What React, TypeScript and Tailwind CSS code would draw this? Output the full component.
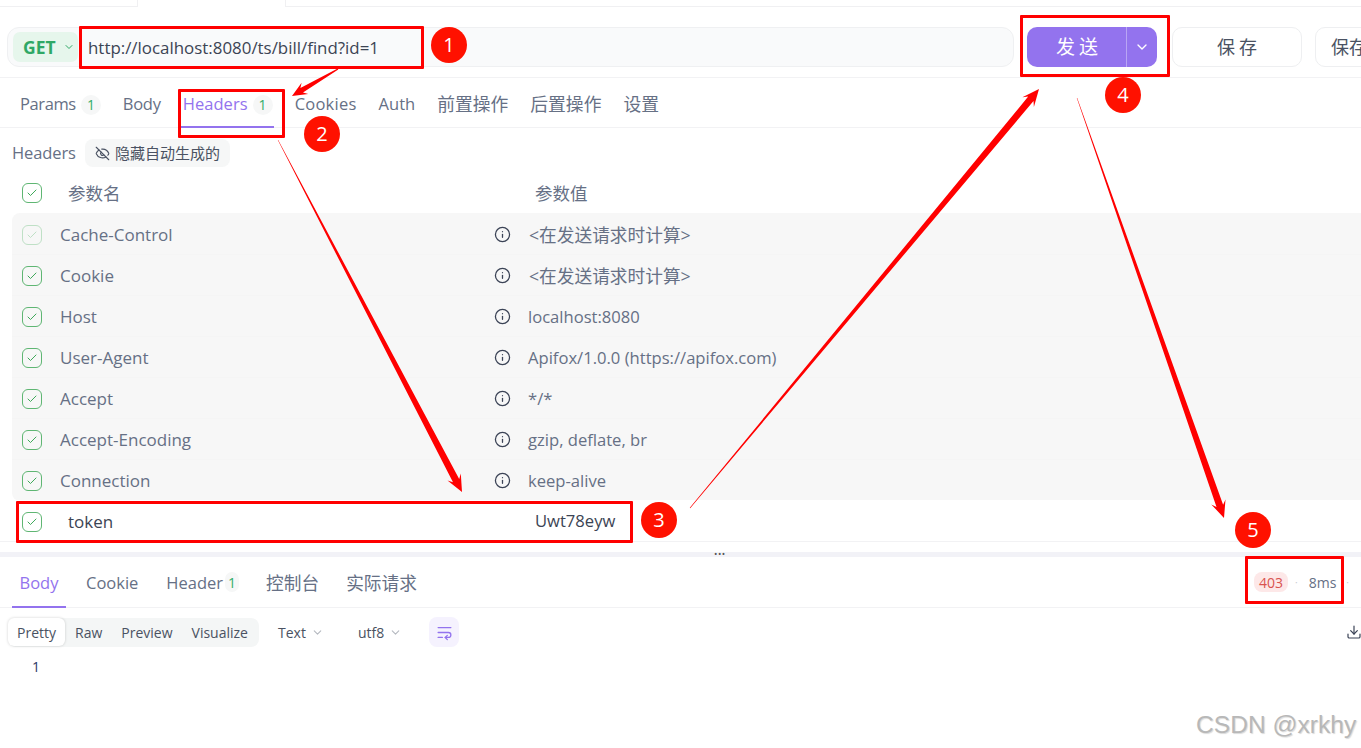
import { Check, ChevronDown, Download, EyeOff, Info, WrapText } from 'lucide-react';

const requestTabs = [
  { label: 'Params', badge: '1', spacing: 'tracking-[-0.4px]' },
  { label: 'Body', spacing: 'tracking-[-0.25px]' },
  { label: 'Headers', badge: '1', active: true, spacing: 'tracking-[0.05px]' },
  { label: 'Cookies', spacing: 'tracking-[0.25px]' },
  { label: 'Auth' },
  { label: '前置操作', spacing: 'text-[17.8px]' },
  { label: '后置操作', spacing: 'text-[17.8px]' },
  { label: '设置', spacing: 'text-[17.8px]' },
];

const autoHeaders = [
  { name: 'Cache-Control', value: '<在发送请求时计算>', faded: true, cjk: true },
  { name: 'Cookie', value: '<在发送请求时计算>', cjk: true },
  { name: 'Host', value: 'localhost:8080' },
  { name: 'User-Agent', value: 'Apifox/1.0.0 (https://apifox.com)' },
  { name: 'Accept', value: '*/*' },
  { name: 'Accept-Encoding', value: 'gzip, deflate, br' },
  { name: 'Connection', value: 'keep-alive' },
];

const boxes = [
  'left-[79px] top-[26px] w-[345px] h-[43px]',
  'left-[178px] top-[89px] w-[107px] h-[49px]',
  'left-[16px] top-[501px] w-[617px] h-[42px]',
  'left-[1020px] top-[15px] w-[150px] h-[62px]',
  'left-[1245px] top-[556px] w-[99px] h-[48px]',
];

const markers = [
  { n: '1', pos: 'left-[431px] top-[27px]' },
  { n: '2', pos: 'left-[304px] top-[116px]' },
  { n: '3', pos: 'left-[641px] top-[502px]' },
  { n: '4', pos: 'left-[1105px] top-[77px]' },
  { n: '5', pos: 'left-[1235px] top-[512px]' },
];

// tapered arrow: thin tail, thick at the head
function arrowPoints(x1: number, y1: number, x2: number, y2: number, tail: number, body: number, headW: number, headL: number) {
  const len = Math.hypot(x2 - x1, y2 - y1);
  const ux = (x2 - x1) / len;
  const uy = (y2 - y1) / len;
  const nx = -uy;
  const ny = ux;
  const bx = x2 - ux * headL;
  const by = y2 - uy * headL;
  const nb = bx + ux * headL * 0.25;
  const mb = by + uy * headL * 0.25;
  const p = (x: number, y: number) => `${x.toFixed(1)},${y.toFixed(1)}`;
  return [
    p(x1 + (nx * tail) / 2, y1 + (ny * tail) / 2),
    p(nb + (nx * body) / 2, mb + (ny * body) / 2),
    p(bx + (nx * headW) / 2, by + (ny * headW) / 2),
    p(x2, y2),
    p(bx - (nx * headW) / 2, by - (ny * headW) / 2),
    p(nb - (nx * body) / 2, mb - (ny * body) / 2),
    p(x1 - (nx * tail) / 2, y1 - (ny * tail) / 2),
  ].join(' ');
}

const CheckBox = ({ faded }: { faded?: boolean }) => (
  <span
    className={`flex h-[20px] w-[20px] shrink-0 items-center justify-center rounded-[6px] border ${
      faded ? 'border-[#bfe0c6] text-[#bfe0c6]' : 'border-[#5fb673] text-[#3fa95a]'
    }`}
  >
    <Check size={12} strokeWidth={2} />
  </span>
);

const Badge = ({ children }: { children: string }) => (
  <span className="ml-[5px] flex h-[20px] w-[20px] items-center justify-center rounded-full bg-[#f6f7f7] text-[14px] text-[#32ad6a]">
    {children}
  </span>
);

export default function App() {
  return (
    <div
      className="relative h-[748px] w-[1361px] overflow-hidden bg-white text-[16.5px] text-[#667085]"
      style={{ fontFamily: '"Open Sans", "Noto Sans CJK SC", sans-serif' }}
    >
      {/* window tabs strip */}
      <div className="flex h-[7px] border-b border-[#f0f0f2]">
        <div className="w-[138px] border-r border-[#f0f0f2]" />
        <div className="-mb-px w-[148px] border-r border-[#f0f0f2] bg-white" />
      </div>

      {/* url row */}
      <div className="flex h-[71px] items-start gap-[13px] border-b border-[#f2f2f4] pl-[7px] pt-[20px]">
        <div className="flex h-[40px] w-[1007px] shrink-0 items-center rounded-[12px] border border-[#eff0f2] bg-[#f9fafb] pl-[5px]">
          <span className="flex h-[30px] w-[65px] items-center gap-[7px] rounded-[7px] bg-[#e6f6ec] pl-[10px] text-[17.5px] text-[#2fa866]">
            <span className="font-bold">GET</span>
            <ChevronDown size={12} strokeWidth={2} />
          </span>
          <span className="ml-[10px] pt-[1px] text-[16.9px] text-[#3c4454]">http://localhost:8080/ts/bill/find?id=1</span>
        </div>
        <div className="flex h-[40px] w-[130px] shrink-0 overflow-hidden rounded-[10px] bg-[#9373ee] text-white">
          <span className="flex w-[100px] items-center justify-center border-r border-[#b9a5f4] pl-[5px] pt-[1px] text-[19px] tracking-[4px]">发送</span>
          <span className="flex flex-1 items-center justify-center">
            <ChevronDown size={16} strokeWidth={2} />
          </span>
        </div>
        <div className="ml-[2px] flex h-[40px] w-[130px] shrink-0 items-center justify-center rounded-[10px] border border-[#eeeff1] pl-[4px] pt-[1px] text-[18px] tracking-[4px] text-[#4a5262]">保存</div>
        <div className="flex h-[40px] w-[90px] shrink-0 items-center rounded-[10px] border border-[#eeeff1] pl-[15px] pt-[1px] text-[18px] text-[#4a5262]">保存为</div>
      </div>

      {/* request tabs */}
      <div className="flex h-[50px] items-center border-b border-[#f2f2f4] pl-[20px]">
        {requestTabs.map((tab) => (
          <div
            key={tab.label}
            className={`relative mr-[22px] flex h-full items-center pt-[4px] last:mr-0 ${tab.active ? 'text-[#9373ee]' : ''} ${tab.spacing ?? ''}`}
          >
            {tab.label}
            {tab.badge && <Badge>{tab.badge}</Badge>}
            {tab.active && <span className="absolute -bottom-px -left-[4px] -right-[1px] h-[2px] bg-[#9373ee]" />}
          </div>
        ))}
      </div>

      {/* headers title */}
      <div className="flex h-[45px] items-center pb-[6px] pl-[12px] pt-[11px]">
        <span className="pt-[1px] tracking-[-0.1px]">Headers</span>
        <span className="ml-[9px] flex h-[28px] w-[145px] items-center gap-[5px] rounded-[8px] bg-[#f6f7f7] pl-[10px] text-[15px] text-[#4a5262]">
          <EyeOff size={15} strokeWidth={1.8} />
          隐藏自动生成的
        </span>
      </div>

      {/* header table */}
      <div className="flex h-[40px] items-center pl-[22px]">
        <CheckBox />
        <span className="ml-[26px] w-[467px] text-[17.5px]">参数名</span>
        <span className="text-[17.5px]">参数值</span>
      </div>
      <div className="ml-[12px] rounded-l-[8px] bg-[#f7f7f7] pt-[1px]">
        {autoHeaders.map((row) => (
          <div key={row.name} className="flex h-[41px] items-center border-b border-[#f5f5f5] pl-[10px] pt-[2px]">
            <CheckBox faded={row.faded} />
            <span className="ml-[18px] w-[434px] text-[17px]">{row.name}</span>
            <Info size={17} strokeWidth={1.8} className="-mt-[2px] text-[#3b4356]" />
            <span className={row.cjk ? 'ml-[18px] text-[17.7px]' : 'ml-[17px] text-[16.6px]'}>{row.value}</span>
          </div>
        ))}
      </div>
      <div className="-mt-px flex h-[42px] items-center border-b border-[#f2f2f4] bg-white pl-[22px] pt-[2px] text-[#3c4454]">
        <CheckBox />
        <span className="ml-[26px] w-[467px] text-[17px]">token</span>
        <span className="text-[16.6px]">Uwt78eyw</span>
      </div>

      {/* pane divider */}
      <div className="relative mt-[10px] h-[5px] bg-[#f2f2f7]">
        <span className="absolute -top-[1px] left-[714px] text-[9px] leading-[6px] tracking-[0.5px] text-[#555]">•••</span>
      </div>

      {/* response tabs */}
      <div className="relative flex h-[51px] items-center justify-between border-b border-[#f2f2f4] pl-[12px]">
        <div className="flex h-full items-center pt-[3px]">
          <div className="relative flex h-full w-[54px] items-center justify-center text-[#9373ee]">
            Body
            <span className="absolute -bottom-px left-0 right-0 h-[2px] bg-[#9373ee]" />
          </div>
          <span className="ml-[20px]">Cookie</span>
          <span className="ml-[28px]">Header</span>
          <span className="mb-[3px] ml-[2px] flex h-[20px] w-[14px] items-center justify-center rounded-full bg-[#f6f7f7] text-[14px] text-[#32ad6a]">1</span>
          <span className="ml-[27px] text-[17.7px]">控制台</span>
          <span className="ml-[27px] text-[17.7px]">实际请求</span>
        </div>
        <div className="mr-[12px] flex items-center text-[14px]">
          <span className="flex h-[20px] w-[34px] items-center justify-center rounded-[8px] bg-[#fde8e8] text-[#d9534f]">403</span>
          <span className="ml-[7px] mr-[11px] text-[10px] text-[#c8ccd2]">·</span>
          <span>8ms</span>
          <span className="ml-[10px] text-[10px] text-[#c8ccd2]">·</span>
        </div>
      </div>

      {/* response toolbar */}
      <div className="flex h-[48px] items-center pl-[8px] text-[14px]">
        <div className="flex h-[29px] w-[251px] items-center rounded-[8px] bg-[#f4f6f6] text-[#4a5262]">
          <span className="flex h-[28px] w-[57px] items-center justify-center rounded-[6px] bg-white shadow-[0_0_3px_rgba(0,0,0,0.18)]">Pretty</span>
          <span className="ml-[10px]">Raw</span>
          <span className="ml-[19px]">Preview</span>
          <span className="ml-[19px]">Visualize</span>
        </div>
        <span className="ml-[19px] flex items-center gap-[5px] text-[#4a5262]">
          Text <ChevronDown size={13} className="text-[#b5b9c0]" />
        </span>
        <span className="ml-[34px] flex items-center gap-[5px] text-[#4a5262]">
          utf8 <ChevronDown size={13} className="text-[#b5b9c0]" />
        </span>
        <span className="ml-[27px] flex h-[30px] w-[30px] items-center justify-center rounded-[8px] bg-[#f5f2fe] text-[#9373ee]">
          <WrapText size={17} strokeWidth={1.8} />
        </span>
        <Download size={16} strokeWidth={1.8} className="ml-auto mr-[-1px] text-[#3b4356]" />
      </div>

      {/* response body */}
      <div className="pl-[32px] text-[14px] text-[#2b3a67]">1</div>

      {/* annotations drawn over the screenshot */}
      <svg className="absolute left-0 top-0" width="1361" height="748" fill="#ff0000">
        <polygon points={arrowPoints(338, 69, 292, 96, 1, 5, 13, 15)} />
        <polygon points={arrowPoints(278, 140, 462, 492, 0.5, 7, 15, 17)} />
        <polygon points={arrowPoints(690, 508, 1039, 89, 0.5, 7, 15, 17)} />
        <polygon points={arrowPoints(1077, 98, 1224, 518, 0.5, 7, 15, 17)} />
      </svg>
      {boxes.map((box) => (
        <div key={box} className={`absolute rounded-[1px] border-[3px] border-[#ff0000] ${box}`} />
      ))}
      {markers.map((m) => (
        <div
          key={m.n}
          className={`absolute flex h-[36px] w-[36px] items-center justify-center rounded-full bg-[#ff1100] text-[20px] text-white ${m.pos}`}
        >
          {m.n}
        </div>
      ))}

      <div
        className="absolute left-[1196px] top-[707px] text-[24.6px] text-[#b8b8b8] [text-shadow:1px_1px_1px_rgba(0,0,0,0.15)]"
        style={{ fontFamily: '"Liberation Sans", sans-serif' }}
      >
        CSDN @xrkhy
      </div>
    </div>
  );
}
